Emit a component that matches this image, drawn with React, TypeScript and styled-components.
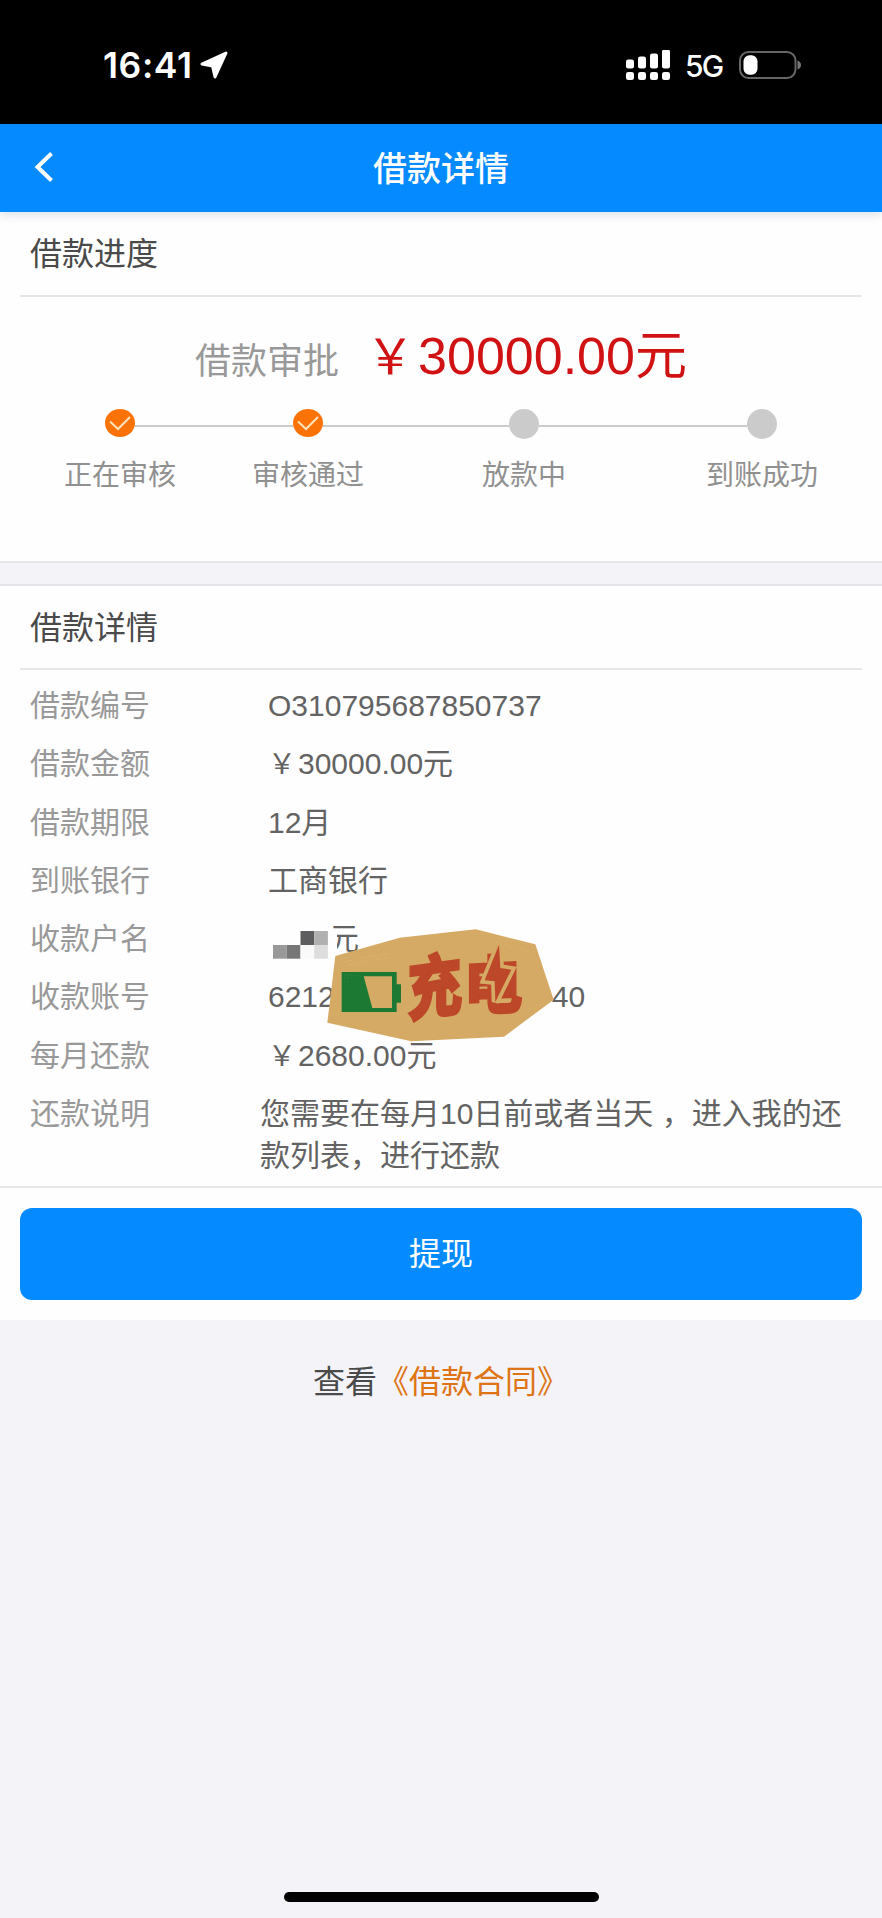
import React from "react";
import styled, { createGlobalStyle } from "styled-components";

const Global = createGlobalStyle`
  * { box-sizing: border-box; }
  body {
    margin: 0;
    background: #f3f3f8;
    font-family: "Liberation Sans", "Noto Sans CJK SC", sans-serif;
  }
`;

const Screen = styled.div`
  display: flex;
  flex-direction: column;
  width: 882px;
  height: 1918px;
  overflow: hidden;
  background: #f3f3f8;
`;

const StatusBar = styled.div`
  display: flex;
  align-items: center;
  justify-content: space-between;
  flex: none;
  height: 124px;
  padding: 6px 81px 0 103px;
  background: #000;
  color: #fff;
  font-family: Inter, sans-serif;
`;

const StatusGroup = styled.div`
  display: flex;
  align-items: center;
`;

const Clock = styled.span`
  width: 97px;
  padding-top: 2px;
  font-size: 35.5px;
  font-weight: 600;
  line-height: 40px;
  letter-spacing: 0.6px;
`;

const Network = styled.span`
  width: 53px;
  margin-left: 15px;
  padding-top: 2px;
  font-size: 30px;
  font-weight: 500;
  line-height: 34px;
  letter-spacing: -1.8px;
`;

const NavBar = styled.header`
  display: grid;
  grid-template-columns: 80px 1fr 80px;
  align-items: center;
  flex: none;
  height: 88px;
  background: #058bff;
  color: #fff;
  box-shadow: 0 2px 10px rgba(0, 40, 80, 0.16);
  z-index: 1;
`;

const BackButton = styled.button`
  display: flex;
  padding: 0 0 2px 34px;
  border: 0;
  background: none;
`;

const NavTitle = styled.h1`
  margin: 0;
  padding-top: 2px;
  font-size: 34px;
  font-weight: 500;
  line-height: 50px;
  text-align: center;
`;

const Panel = styled.section<{ $height: number }>`
  flex: none;
  height: ${(p) => p.$height}px;
  border-bottom: 2px solid #e7e7ea;
  background: #fefefe;
`;

const PanelTitle = styled.h2<{ $height: number; $line: number }>`
  height: ${(p) => p.$height}px;
  margin: 0 20px;
  padding-left: 10px;
  border-bottom: 2px solid #e6e6e6;
  color: #4a4a4a;
  font-size: 32px;
  font-weight: 400;
  line-height: ${(p) => p.$line}px;
`;

const Band = styled.div`
  flex: none;
  height: 23px;
  border-bottom: 2px solid #e4e4ea;
`;

const Amount = styled.div`
  display: flex;
  align-items: baseline;
  justify-content: center;
  gap: 27px;
  height: 112px;
  padding-top: 21px;
`;

const AmountLabel = styled.span`
  color: #999;
  font-size: 36px;
`;

const AmountValue = styled.span`
  color: #d01214;
  font-size: 52px;
  line-height: 76px;
`;

const Yen = styled.span`
  display: inline-block;
  width: 1.075em;
  font-size: 0.93em;
  line-height: 1;
`;

const Steps = styled.div`
  display: flex;
  align-items: flex-start;
  padding-left: 64px;
`;

const Step = styled.div`
  display: flex;
  flex-direction: column;
  align-items: center;
  gap: 17px;
  width: 112px;
  margin-right: -41px;
  color: #909090;
  font-size: 28px;
  line-height: 40px;
  white-space: nowrap;
`;

const Connector = styled.div<{ $width: number }>`
  width: ${(p) => p.$width}px;
  height: 2px;
  margin-top: 16px;
  margin-right: -41px;
  background: #cbcbcb;
`;

const Dot = styled.div<{ $done: boolean }>`
  display: flex;
  align-items: center;
  justify-content: center;
  width: 30px;
  height: ${(p) => (p.$done ? 28 : 30)}px;
  margin-bottom: ${(p) => (p.$done ? 2 : 0)}px;
  border-radius: 50%;
  background: ${(p) => (p.$done ? "#fb7307" : "#cbcbcb")};
`;

const Details = styled.dl`
  margin: 0;
  padding: 7px 30px 0;
  font-size: 30px;
`;

const Row = styled.div<{ $multi?: boolean }>`
  display: flex;
  position: relative;
  height: ${(p) => (p.$multi ? "auto" : "58.3px")};
  padding-top: ${(p) => (p.$multi ? 8 : 0)}px;
  line-height: ${(p) => (p.$multi ? "42px" : "58.3px")};
`;

const Label = styled.dt<{ $width?: number }>`
  flex: none;
  width: ${(p) => p.$width ?? 238}px;
  color: #999;
`;

const Value = styled.dd`
  flex: 1;
  margin: 0;
  color: #636363;
`;

const MaskedName = styled(Value)`
  display: flex;
`;

const Note = styled(Value)`
  flex: none;
  width: 586px;
`;

const Mosaic = styled.svg`
  position: relative;
  margin: 21px -8px 0 5px;
`;

const AccountTail = styled.span`
  margin-left: 217px;
`;

const Sticker = styled.svg`
  position: absolute;
  left: 297px;
  top: -39px;
`;

const ActionArea = styled.div`
  flex: none;
  height: 132px;
  padding: 20px;
  background: #fefefe;
`;

const Withdraw = styled.button`
  display: block;
  width: 100%;
  height: 92px;
  padding: 0 0 7px;
  border: 0;
  border-radius: 12px;
  background: #058bff;
  color: #fff;
  font: inherit;
  font-size: 32px;
`;

const Contract = styled.p`
  margin: 38px 0 0;
  color: #4a4a4a;
  font-size: 32px;
  line-height: 48px;
  text-align: center;
`;

const ContractLink = styled.a`
  color: #de7414;
`;

const HomeIndicator = styled.div`
  width: 315px;
  height: 10px;
  margin: auto auto 16px;
  border-radius: 5px;
  background: #000;
`;

const steps = [
  { label: "正在审核", done: true, next: 158 },
  { label: "审核通过", done: true, next: 186 },
  { label: "放款中", done: false, next: 208 },
  { label: "到账成功", done: false, next: 0 },
];

const bars = [
  { x: 0, h: 9 },
  { x: 12, h: 12 },
  { x: 24, h: 15 },
  { x: 36, h: 19 },
];

const ChargeSticker = () => (
  <Sticker width="227" height="114" viewBox="262 86 681 342">
    <path
      fill="#d5aa64"
      d="M287 167L480 112L708 87L887 132L942 298L793 409L515 423L263 367Z"
    />
    <g fill="none" stroke="#e6cb96" strokeWidth="3" opacity=".45">
      <path strokeDasharray="3 9 6 5 2 11" d="M318 184L370 172L462 158M330 193L400 179L450 172" />
      <path strokeDasharray="2 8 4 10" d="M760 124L850 146L880 165" />
    </g>
    <path fill="#1b7933" d="M306 215H471V252H484V307H471V335H306Z" />
    <path fill="#d5aa64" d="M372 228H457V323H398Z" />
    <g fill="none" stroke="#d5aa64" strokeWidth="2" opacity=".4">
      <path strokeDasharray="2 7 3 9" d="M312 224H360M314 233H345M312 243H332" />
    </g>
    <g
      fill="#bd4729"
      stroke="#bd4729"
      strokeWidth="5"
      fontFamily='"Noto Sans CJK SC", sans-serif'
      fontWeight="900"
    >
      <text transform="translate(502 347) skewY(-8) scale(.88 1.1)" fontSize="188">充</text>
      <text transform="translate(672 328) skewY(-3) scale(.98 1.06)" fontSize="180">电</text>
    </g>
    <path
      fill="#bd4729"
      stroke="#d5aa64"
      strokeWidth="22"
      paintOrder="stroke"
      d="M778 133L735 240L765 243L767 305L815 208L782 203Z"
    />
  </Sticker>
);

export default function App() {
  return (
    <>
      <Global />
      <Screen>
        <StatusBar>
          <StatusGroup>
            <Clock>16:41</Clock>
            <svg width="29" height="28" viewBox="0 0 29 28">
              <path
                d="M2 13L26 2L15 26L12.5 15Z"
                fill="#fff"
                stroke="#fff"
                strokeWidth="3"
                strokeLinejoin="round"
              />
            </svg>
          </StatusGroup>
          <StatusGroup>
            <svg width="44" height="30" viewBox="0 0 44 30" fill="#fff">
              {bars.map((b) => (
                <g key={b.x}>
                  <rect x={b.x} y={18.5 - b.h} width="8" height={b.h} rx="2.3" />
                  <rect x={b.x} y="22" width="8" height="8" rx="2.3" />
                </g>
              ))}
            </svg>
            <Network>5G</Network>
            <svg width="63" height="30" viewBox="0 0 63 30">
              <rect x="2" y="2" width="55.5" height="26" rx="8.5" fill="none" stroke="#666" strokeWidth="2" />
              <rect x="5.5" y="5.3" width="14" height="19.4" rx="6" fill="#fff" />
              <path d="M59.5 10.5Q63 12 63 15T59.5 19.5Z" fill="#777" />
            </svg>
          </StatusGroup>
        </StatusBar>

        <NavBar>
          <BackButton aria-label="返回">
            <svg width="20" height="30" viewBox="0 0 20 30">
              <path d="M17.5 1.5L3.5 15L17.5 28.5" fill="none" stroke="#fff" strokeWidth="4" />
            </svg>
          </BackButton>
          <NavTitle>借款详情</NavTitle>
        </NavBar>

        <Panel $height={351}>
          <PanelTitle $height={85} $line={85}>借款进度</PanelTitle>
          <Amount>
            <AmountLabel>借款审批</AmountLabel>
            <AmountValue>
              <Yen>￥</Yen>30000.00元
            </AmountValue>
          </Amount>
          <Steps>
            {steps.map((s) => (
              <React.Fragment key={s.label}>
                <Step>
                  <Dot $done={s.done}>
                    {s.done && (
                      <svg width="22" height="16" viewBox="0 0 22 16">
                        <path d="M1 6.5L9 14L21 2" fill="none" stroke="#ffe2b8" strokeWidth="2" />
                      </svg>
                    )}
                  </Dot>
                  {s.label}
                </Step>
                {s.next > 0 && <Connector $width={s.next} />}
              </React.Fragment>
            ))}
          </Steps>
        </Panel>
        <Band />

        <Panel $height={602}>
          <PanelTitle $height={84} $line={84}>借款详情</PanelTitle>
          <Details>
            <Row>
              <Label>借款编号</Label>
              <Value>O310795687850737</Value>
            </Row>
            <Row>
              <Label>借款金额</Label>
              <Value>
                <Yen>￥</Yen>30000.00元
              </Value>
            </Row>
            <Row>
              <Label>借款期限</Label>
              <Value>12月</Value>
            </Row>
            <Row>
              <Label>到账银行</Label>
              <Value>工商银行</Value>
            </Row>
            <Row>
              <Label>收款户名</Label>
              <MaskedName>
                <Mosaic width="64" height="28" viewBox="0 0 64 28">
                  <rect width="64" height="28" fill="#fefefe" />
                  <rect x="27.5" width="13.7" height="14" fill="#5d5d5f" />
                  <rect x="41.2" width="13.7" height="14" fill="#b0b0b0" />
                  <rect y="14" width="13.7" height="13.7" fill="#999" />
                  <rect x="13.7" y="14" width="13.8" height="13.7" fill="#777" />
                  <rect x="27.5" y="14" width="13.7" height="13.7" fill="#fafafa" />
                  <rect x="41.2" y="14" width="13.7" height="13.7" fill="#ddd" />
                </Mosaic>
                元
              </MaskedName>
            </Row>
            <Row>
              <Label>收款账号</Label>
              <Value>
                6212<AccountTail>40</AccountTail>
              </Value>
              <ChargeSticker />
            </Row>
            <Row>
              <Label>每月还款</Label>
              <Value>
                <Yen>￥</Yen>2680.00元
              </Value>
            </Row>
            <Row $multi>
              <Label $width={230}>还款说明</Label>
              <Note>您需要在每月10日前或者当天 ，进入我的还款列表，进行还款</Note>
            </Row>
          </Details>
        </Panel>

        <ActionArea>
          <Withdraw>提现</Withdraw>
        </ActionArea>
        <Contract>
          查看<ContractLink>《借款合同》</ContractLink>
        </Contract>
        <HomeIndicator />
      </Screen>
    </>
  );
}
